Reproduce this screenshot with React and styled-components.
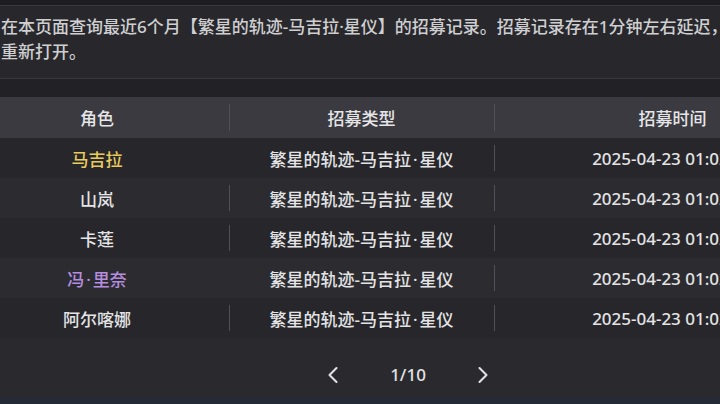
import styled, { createGlobalStyle } from "styled-components"
import { ChevronLeft, ChevronRight } from "lucide-react"

const Global = createGlobalStyle`
    html, body {
        margin: 0;
        padding: 0;
        background: #1f1f23;
    }
    body {
        font-family: "Noto Sans", "Noto Sans CJK SC", sans-serif;
    }
`

const Page = styled.div`
    width: 720px;
    height: 404px;
    overflow: hidden;
    display: flex;
    flex-direction: column;
    background: #232327;
`

const TopStrip = styled.div`
    height: 5px;
    background: #1e1e22;
    border-bottom: 1px solid #38383d;
`

const Notice = styled.div`
    background: #28282c;
    color: #cfcfd2;
    font-size: 17px;
    font-weight: 500;
    line-height: 25px;
    padding: 8px 0 8px 1px;
    height: 56px;
    border-bottom: 1px solid #36363b;
    white-space: nowrap;
`

const Spacer = styled.div`
    height: 18px;
    background: #222226;
`

const Table = styled.div`
    width: 886px;
    margin-left: -35px;
    display: flex;
    flex-direction: column;
`

const Row = styled.div`
    display: grid;
    grid-template-columns: 264px 265px 357px;
    height: ${p => (p.$head ? 41 : 40)}px;
    background: ${p => (p.$head ? "#3a3a40" : p.$odd ? "#27272b" : "#2c2c30")};
    color: ${p => (p.$head ? "#e6e6e8" : "#e4e4e6")};
    font-size: 17px;
    font-weight: 500;
`

const Cell = styled.div`
    display: flex;
    align-items: center;
    justify-content: center;
    position: relative;
    white-space: nowrap;
    color: ${p => p.$color || "inherit"};

    & + &::before {
        content: "";
        position: absolute;
        left: 0;
        top: 7px;
        bottom: 7px;
        width: 1px;
        background: #505056;
    }
`

const Dot = styled.span`
    margin: 0 2px;
`

const Pager = styled.div`
    height: 45px;
    padding-top: 14px;
    display: flex;
    align-items: center;
    justify-content: center;
    gap: 43px;
    color: #e2e2e4;
    font-size: 17px;
    font-weight: 500;
    background: #2a2a2e;
`

const PageNo = styled.span`
    text-align: center;
`

const BottomBand = styled.div`
    flex: 1;
    background: #252a37;
`

const rows = [
    { name: ["马吉拉"], color: "#e9cb5e" },
    { name: ["山岚"] },
    { name: ["卡莲"] },
    { name: ["冯", "里奈"], color: "#b68ee0" },
    { name: ["阿尔喀娜"] },
]

// names with a middle dot get a little air round it, as in the game UI
const Dotted = ({ parts }) =>
    parts.map((p, i) => (
        <span key={i}>
            {i > 0 && <Dot>·</Dot>}
            {p}
        </span>
    ))

export default function App() {
    return (
        <Page>
            <Global />
            <TopStrip />
            <Notice>
                在本页面查询最近6个月【繁星的轨迹-马吉拉·星仪】的招募记录。招募记录存在1分钟左右延迟，如未显示请稍后
                <br />
                重新打开。
            </Notice>
            <Spacer />
            <Table>
                <Row $head>
                    <Cell>角色</Cell>
                    <Cell>招募类型</Cell>
                    <Cell>招募时间</Cell>
                </Row>
                {rows.map((r, i) => (
                    <Row key={i} $odd={i % 2 === 0}>
                        <Cell $color={r.color}><Dotted parts={r.name} /></Cell>
                        <Cell><Dotted parts={["繁星的轨迹-马吉拉", "星仪"]} /></Cell>
                        <Cell>2025-04-23 01:02:36</Cell>
                    </Row>
                ))}
                <Pager>
                    <ChevronLeft size={28} strokeWidth={1.8} />
                    <PageNo>1/10</PageNo>
                    <ChevronRight size={28} strokeWidth={1.8} />
                </Pager>
            </Table>
            <BottomBand />
        </Page>
    )
}
